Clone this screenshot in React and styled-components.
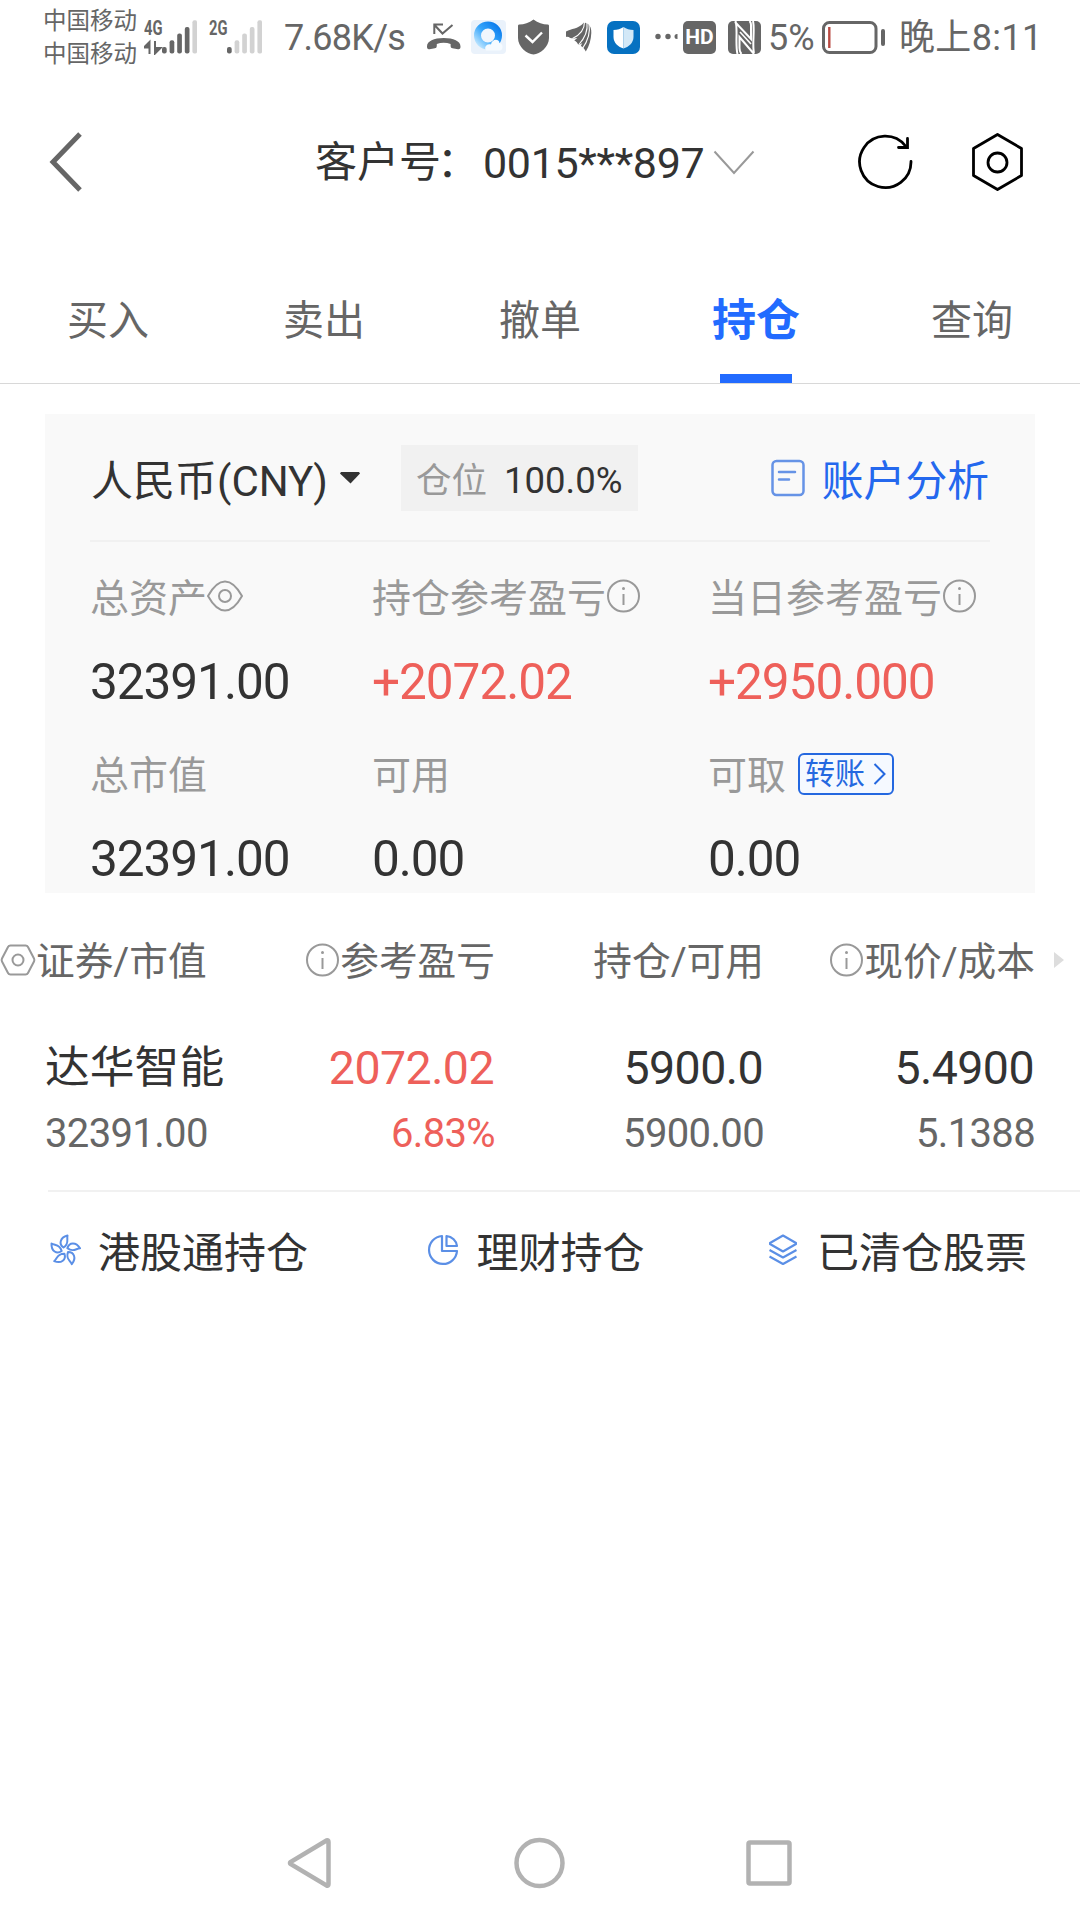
import React from 'react';
import styled, { createGlobalStyle } from 'styled-components';

const tabs = ['买入', '卖出', '撤单', '持仓', '查询']

export const App = () => (
  <>
    <GlobalStyle />
    <Screen>
      <StatusBar />
      <Header />
      <TabBar>
        {tabs.map((tab) => (
          <Tab key={tab} type="button" $active={tab === '持仓'}>{tab}</Tab>
        ))}
      </TabBar>
      <AccountCard />
      <Holdings />
      <QuickLinks />
      <SystemNav />
    </Screen>
  </>
)

export default App

const StatusBar = () => (
  <StatusWrapper>
    <Carriers>
      <span>中国移动</span>
      <span>中国移动</span>
    </Carriers>
    <Signal $left={7}>
      <Network>4G</Network>
      <SignalIcon bars={4} arrows />
    </Signal>
    <Signal $left={12}>
      <Network>2G</Network>
      <SignalIcon bars={1} />
    </Signal>
    <StatusText $left={22} $width={123} $spacing="-0.02em">7.68K/s</StatusText>
    <StatusIcon $left={19} width="35" height="34" viewBox="0 0 35 34">
      <path d="M8.300 14V4.500h8.700M8.500 5l8 8.500L26.500 5" fill="none" stroke="#666" strokeWidth="2" />
      <path d="M1 26.500c0-5.500 7-8.500 16.700-8.500s16.800 3 16.800 8.500c0 2-.7 3-2.500 2.700l-5.500-1c-1.600-.3-2-.8-1.900-4.200-4.300-1.600-9.500-1.600-13.800 0 .1 3.400-.3 3.900-1.900 4.200l-5.400 1C1.700 29.500 1 28.500 1 26.500z" fill="#666" />
    </StatusIcon>
    <StatusIcon $left={10} width="35" height="34" viewBox="0 0 35 34">
      <defs>
        <linearGradient id="ring" x1="1" y1="0" x2="0" y2="1">
          <stop offset="0" stopColor="#0879ec" />
          <stop offset=".5" stopColor="#35a5fb" />
          <stop offset="1" stopColor="#c3e8ff" />
        </linearGradient>
      </defs>
      <rect width="35" height="34" rx="4" fill="#eaf2fb" />
      <circle cx="17" cy="15.500" r="10.500" fill="#f0f6fd" stroke="url(#ring)" strokeWidth="7" />
      <path d="M15 30.500c-2.500-4 1.500-7.500 5-6 1-6 8-6 8.500-1.500 4 .5 4 7.500 0 7.500z" fill="#f6fbff" />
    </StatusIcon>
    <StatusIcon $left={12} width="31" height="36" viewBox="0 0 31 36">
      <path d="M15.500.5C11 4 6 5.500 1.500 5.500.5 5.500 0 6 0 7v12c0 9 9 16 15.500 16.500C22 35 31 28 31 19V7c0-1-.5-1.500-1.500-1.500C25 5.500 20 4 15.500.5z" fill="#666" />
      <path d="M7.500 16.500l7 6.500 9.500-9.500" fill="none" stroke="#fff" strokeWidth="2.400" />
    </StatusIcon>
    <StatusIcon $left={17} width="26" height="34" viewBox="0 0 26 34">
      <path d="M0 11.500C6 8 11 10 18 2.500l2 .5 2 1c2.500 2 3.500 5 3.300 9-.3 7-2 13-5.500 18.500-1.500-3-3-4.500-5-5.500l1.500-3c-1.500 1-2.500 1.500-4 2-.8-2.300-2-3.500-4-4.500l3-2.500c-3 .7-5.500.5-7 0-1.500-1-3-1.500-4.300-1z" fill="#666" />
      <path d="M18.500 2c0 7-4.500 13-12 16.500M21 3c1 8-2 15-8.500 22M23 4.500c1.500 8-1 16-6.500 24" fill="none" stroke="#fff" strokeWidth="1.100" />
    </StatusIcon>
    <StatusIcon $left={15} width="33" height="33" viewBox="0 0 33 33">
      <rect width="33" height="33" rx="7" fill="#0671c1" />
      <path d="M16.500 6c-3 2-6 3-10 3v7c0 6 5 10 10 11.500z" fill="#fff" />
      <path d="M16.500 6c3 2 6 3 10 3v7c0 6-5 10-10 11.500z" fill="#d3e8f7" />
    </StatusIcon>
    <StatusIcon $left={15} width="23" height="10" viewBox="0 0 23 10">
      <circle cx="3" cy="4.500" r="2.700" fill="#666" />
      <circle cx="13" cy="4.500" r="2.700" fill="#666" />
      <path d="M22.500 2h-.5a2.500 2.500 0 0 0 0 5h.5z" fill="#666" />
    </StatusIcon>
    <HdBadge>HD</HdBadge>
    <StatusIcon $left={12} width="33" height="33" viewBox="0 0 33 33">
      <rect width="33" height="33" rx="5" fill="#666" />
      <path d="M7.500 0C10 8 7 24 9.500 33M7 1l16 17V4c0-2-.5-3-1.500-4" fill="none" stroke="#fff" strokeWidth="2" />
      <path d="M26 33L11.500 16v11c0 3 1 5 2 6M25 0c2 8-1 24 1 32" fill="none" stroke="#fff" strokeWidth="2" />
      <path d="M12 11l11 12" fill="none" stroke="#fff" strokeWidth="1.600" />
    </StatusIcon>
    <StatusText $left={7} $width={46}>5%</StatusText>
    <StatusIcon $left={8} width="64" height="33" viewBox="0 0 64 33">
      <rect x="1.500" y="1.500" width="52.500" height="30" rx="6" fill="none" stroke="#666" strokeWidth="3" />
      <path d="M7.300 6v21" stroke="#b94a42" strokeWidth="2.400" />
      <rect x="59" y="8" width="4" height="17" rx="2" fill="#666" />
    </StatusIcon>
    <StatusText $left={13} $width={140} $spacing="0.01em">晚上8:11</StatusText>
  </StatusWrapper>
)

const SignalIcon = ({ bars, arrows }) => (
  <svg width="53" height="35" viewBox="0 0 53 35">
    {arrows && <path d="M5.500 34V22L0 27.500h5M11 21v12.500l5.500-5.500H12" fill="#666" stroke="#666" strokeWidth="2" />}
    {[0, 1, 2, 3, 4].map((i) => (
      <rect
        key={i}
        x={18 + i * 7.600}
        y={27 - i * 6.700}
        width="4.700"
        height={6.500 + i * 6.700}
        rx="2"
        fill={i < bars ? '#666' : '#d2d2d2'} />
    ))}
  </svg>
)

const Header = () => (
  <HeaderWrapper>
    <svg width="34" height="60" viewBox="0 0 34 60">
      <path d="M32 2L5 30l27 28" fill="none" stroke="#666" strokeWidth="5" />
    </svg>
    <Account>
      <AccountLabel>客户号<Colon>：</Colon></AccountLabel>
      <AccountNumber>0015***897</AccountNumber>
      <svg width="42" height="26" viewBox="0 0 42 26">
        <path d="M1.500 2.500L21 24 40.500 2.500" fill="none" stroke="#999" strokeWidth="2" />
      </svg>
    </Account>
    <HeaderActions>
      <svg width="56" height="56" viewBox="0 0 56 56" fill="none" stroke="#000" strokeWidth="2.800" strokeLinecap="round">
        <path d="M53 27.500A25.700 25.700 0 1 1 47.500 12" />
        <path d="M40.500 13.500h9V4.500" />
      </svg>
      <svg width="52" height="60" viewBox="0 0 52 60" fill="none" stroke="#000" strokeWidth="2.800" strokeLinejoin="round">
        <path d="M25.500 2.500l24 14v27l-24 14-24-14v-27z" />
        <circle cx="25.500" cy="30.500" r="9.500" />
      </svg>
    </HeaderActions>
  </HeaderWrapper>
)

const InfoIcon = () => (
  <svg width="35" height="34" viewBox="0 0 35 34" fill="none" stroke="#999" strokeWidth="2">
    <circle cx="17.500" cy="17" r="15.500" />
    <path d="M17.500 15v11" />
    <circle cx="17.500" cy="9.500" r="1.500" fill="#999" stroke="none" />
  </svg>
)

const EyeIcon = () => (
  <svg width="37" height="34" viewBox="0 0 37 34" fill="none" stroke="#999" strokeWidth="2">
    <path d="M1 17C6 8 12 2.500 18 2.500S30 8 35 17C30 26 24 31.500 18 31.500S6 26 1 17z" strokeLinejoin="round" />
    <circle cx="18" cy="17" r="6" />
  </svg>
)

const AccountCard = () => (
  <Card>
    <CardTop>
      <Currency>人民币(CNY)</Currency>
      <svg width="20" height="12" viewBox="0 0 20 12">
        <path d="M1 0h18l1 1.500L10.500 11.500 0 1.500z" fill="#333" />
      </svg>
      <Position>
        仓位
        <strong>100.0%</strong>
      </Position>
      <Analysis>
        <svg width="34" height="38" viewBox="0 0 34 38" fill="none" stroke="#6693e6" strokeWidth="2.500">
          <rect x="1.500" y="2" width="31" height="34" rx="4" />
          <path d="M8 13h16M8 20.500h10" strokeLinecap="round" />
        </svg>
        <span>账户分析</span>
      </Analysis>
    </CardTop>
    <Figures>
      <Figure>
        <FigureLabel><span>总资产</span><EyeIcon /></FigureLabel>
        <FigureValue>32391.00</FigureValue>
      </Figure>
      <Figure>
        <FigureLabel><span>持仓参考盈亏</span><InfoIcon /></FigureLabel>
        <FigureValue $up>+2072.02</FigureValue>
      </Figure>
      <Figure>
        <FigureLabel><span>当日参考盈亏</span><InfoIcon /></FigureLabel>
        <FigureValue $up>+2950.000</FigureValue>
      </Figure>
      <Figure>
        <FigureLabel><span>总市值</span></FigureLabel>
        <FigureValue>32391.00</FigureValue>
      </Figure>
      <Figure>
        <FigureLabel><span>可用</span></FigureLabel>
        <FigureValue>0.00</FigureValue>
      </Figure>
      <Figure>
        <FigureLabel>
          <span>可取</span>
          <TransferButton type="button">
            转账
            <svg width="13" height="22" viewBox="0 0 13 22">
              <path d="M1.500 1l10 10-10 10" fill="none" stroke="#2468e0" strokeWidth="2" />
            </svg>
          </TransferButton>
        </FigureLabel>
        <FigureValue>0.00</FigureValue>
      </Figure>
    </Figures>
  </Card>
)

const Holdings = () => (
  <section>
    <TableHead>
      <HeadCell $first>
        <svg width="36" height="32" viewBox="0 0 36 32" fill="none" stroke="#999" strokeWidth="2">
          <path d="M10.500 1.500h15c1 0 2 .5 2.500 1.500l6 11.500c.5 1 .5 2 0 3L28 29c-.5 1-1.500 1.500-2.500 1.500h-15c-1 0-2-.5-2.500-1.500L2 17.500c-.5-1-.5-2 0-3L8 3c.5-1 1.500-1.500 2.500-1.500z" />
          <circle cx="18" cy="16" r="5.500" />
        </svg>
        <span>证券/市值</span>
      </HeadCell>
      <HeadCell><InfoIcon /><span>参考盈亏</span></HeadCell>
      <HeadCell><span>持仓/可用</span></HeadCell>
      <HeadCell><InfoIcon /><span>现价/成本</span></HeadCell>
      <MoreArrow width="10" height="16" viewBox="0 0 10 16">
        <path d="M0 0l10 8-10 8z" fill="#ddd" />
      </MoreArrow>
    </TableHead>
    <StockRow>
      <StockCell $first>
        <StockName>达华智能</StockName>
        <SubValue>32391.00</SubValue>
      </StockCell>
      <StockCell $up>
        <MainValue>2072.02</MainValue>
        <SubValue $up>6.83%</SubValue>
      </StockCell>
      <StockCell>
        <MainValue>5900.0</MainValue>
        <SubValue>5900.00</SubValue>
      </StockCell>
      <StockCell>
        <MainValue>5.4900</MainValue>
        <SubValue>5.1388</SubValue>
      </StockCell>
    </StockRow>
    <Divider />
  </section>
)

const QuickLinks = () => (
  <LinksWrapper>
    <QuickLink $gap={17}>
      <svg width="32" height="32" viewBox="0 0 32 32" fill="none" stroke="#5b8fe6" strokeWidth="2" strokeLinejoin="round">
        {[0, 72, 144, 216, 288].map((angle) => (
          <path
            key={angle}
            d="M14.500 13.500C9.500 10 11 3.500 18.500 1.500c-1 4 2 8-4 12z"
            transform={`rotate(${angle} 16 16.500)`} />
        ))}
      </svg>
      <span>港股通持仓</span>
    </QuickLink>
    <QuickLink $gap={17}>
      <svg width="32" height="32" viewBox="0 0 32 32" fill="none" stroke="#5b8fe6" strokeWidth="2.200" strokeLinejoin="round">
        <path d="M15 2A14 14 0 1 0 30 17H15z" />
        <path d="M19.500 2v10H30C29.500 7 25 2.500 19.500 2z" />
      </svg>
      <span>理财持仓</span>
    </QuickLink>
    <QuickLink $gap={20}>
      <svg width="28" height="32" viewBox="1 0 28 32" fill="none" stroke="#5b8fe6" strokeWidth="2.200" strokeLinejoin="round">
        <path d="M15 1.500l13 7.500v1l-13 7.500L2 10V9z" />
        <path d="M1.500 16L15 23.500 28.500 16M1.500 22.500L15 30l13.500-7.500" />
      </svg>
      <span>已清仓股票</span>
    </QuickLink>
  </LinksWrapper>
)

const SystemNav = () => (
  <NavWrapper>
    <svg width="45" height="52" viewBox="0 0 45 52">
      <path d="M39.500 3.500L3.500 25c-.7.600-.7 1.400 0 2l36 21.500c1.500.5 2 0 2-1.500V5c0-1.500-.5-2-2-1.500z" />
    </svg>
    <svg width="52" height="52" viewBox="0 0 52 52">
      <circle cx="26.500" cy="26" r="23" />
    </svg>
    <svg width="46" height="52" viewBox="0 0 46 52">
      <rect x="2.500" y="5.500" width="41" height="41" rx="1.500" />
    </svg>
  </NavWrapper>
)

// Styled components
const GlobalStyle = createGlobalStyle`
  * {
    box-sizing: border-box;
  }
  body {
    margin: 0;
    background: #fff;
    font-family: Roboto, 'Noto Sans CJK SC', sans-serif;
    color: #333;
  }
  button {
    padding: 0;
    border: none;
    background: none;
    font-family: inherit;
  }
  svg {
    display: block;
    flex-shrink: 0;
  }
`

const Screen = styled.main`
  width: 1080px;
  height: 1920px;
  display: flex;
  flex-direction: column;
  overflow: hidden;
`

const StatusWrapper = styled.div`
  height: 74px;
  padding-left: 43px;
  display: flex;
  align-items: center;
  white-space: nowrap;
  color: #666;
`

const Carriers = styled.div`
  display: flex;
  flex-direction: column;
  width: 94px;
  padding-top: 1px;
  font-size: 23.5px;
  line-height: 33px;
`

const Signal = styled.div`
  width: 53px;
  height: 35px;
  margin-left: ${(props) => props.$left}px;
  position: relative;
`

const Network = styled.span`
  position: absolute;
  left: 0;
  top: 0;
  font-size: 21px;
  line-height: 16px;
  font-weight: 700;
  transform: scaleX(0.7);
  transform-origin: left;
`

const StatusText = styled.span`
  width: ${(props) => props.$width}px;
  margin-left: ${(props) => props.$left}px;
  padding-top: 3px;
  font-size: 36px;
  line-height: 71px;
  letter-spacing: ${(props) => props.$spacing || 'normal'};
`

const StatusIcon = styled.svg`
  margin-left: ${(props) => props.$left}px;
`

const HdBadge = styled.span`
  width: 33px;
  height: 33px;
  margin-left: 5px;
  border-radius: 5px;
  background: #666;
  color: #fff;
  font-size: 21px;
  font-weight: 700;
  line-height: 33px;
  text-align: center;
`

const HeaderWrapper = styled.header`
  height: 176px;
  padding: 0 56px 0 48px;
  display: flex;
  align-items: center;
`

const Account = styled.div`
  display: flex;
  align-items: center;
  margin-left: 233px;
  line-height: 60px;
`

const AccountLabel = styled.span`
  width: 168px;
  padding-top: 2px;
  font-size: 42px;
  white-space: nowrap;
`

const Colon = styled.span`
  margin-left: -4px;
`

const AccountNumber = styled.span`
  width: 230px;
  padding-top: 2px;
  font-size: 43px;
  letter-spacing: -0.008em;
`

const HeaderActions = styled.div`
  display: flex;
  align-items: center;
  gap: 58px;
  margin-left: auto;
`

const TabBar = styled.nav`
  height: 134px;
  display: grid;
  grid-template-columns: repeat(5, 1fr);
  border-bottom: 1px solid #d8d8d8;
`

const Tab = styled.button`
  display: flex;
  flex-direction: column;
  align-items: center;
  justify-content: space-between;
  padding-top: 41px;
  line-height: 60px;
  font-size: ${(props) => (props.$active ? 44 : 41)}px;
  font-weight: ${(props) => (props.$active ? 700 : 400)};
  color: ${(props) => (props.$active ? '#226bff' : '#666')};

  &::after {
    content: '';
    width: 72px;
    height: 9px;
    background: ${(props) => (props.$active ? '#226bff' : 'transparent')};
  }
`

const Card = styled.section`
  height: 479px;
  margin: 30px 45px 0;
  padding: 0 45px;
  background: #f9f9f9;
`

const CardTop = styled.div`
  height: 128px;
  padding: 2px 1px 0;
  display: flex;
  align-items: center;
  border-bottom: 2px solid #f1f1f1;
`

const Currency = styled.span`
  width: 249px;
  padding-bottom: 1px;
  font-size: 42px;
`

const Position = styled.span`
  width: 237px;
  height: 66px;
  margin-left: 41px;
  padding: 3px 0 0 15px;
  background: #f1f1f1;
  color: #999;
  font-size: 35.5px;
  line-height: 66px;
  white-space: nowrap;

  strong {
    margin-left: 17px;
    font-size: 36.5px;
    font-weight: 400;
    color: #333;
  }
`

const Analysis = styled.a`
  display: flex;
  align-items: center;
  gap: 17px;
  margin-left: auto;
  color: #2468ee;
  font-size: 41.8px;

  span {
    padding-bottom: 1px;
  }
`

const Figures = styled.div`
  display: grid;
  grid-template-columns: 282px 336px 1fr;
  grid-auto-rows: 177px;
  padding-top: 19px;
`

const Figure = styled.div`
  white-space: nowrap;
`

const FigureLabel = styled.div`
  height: 70px;
  display: flex;
  align-items: center;
  font-size: 39px;
  color: #999;

  span {
    padding-bottom: 3px;
  }
`

const FigureValue = styled.div`
  font-size: 49.5px;
  line-height: 60px;
  margin-top: 21px;
  letter-spacing: -0.021em;
  color: ${(props) => (props.$up ? '#ee605a' : '#333')};
`

const TransferButton = styled.button`
  width: 96px;
  height: 42px;
  margin: 2px 0 0 12px;
  padding: 0 6px 0 5px;
  display: flex;
  align-items: center;
  justify-content: space-between;
  border: 2px solid #2468e0;
  border-radius: 6px;
  background: #f5f9ff;
  color: #2468e0;
  font-size: 30px;
  line-height: 36px;
`

const TableHead = styled.div`
  height: 135px;
  padding: 0 16px 2px 0;
  display: grid;
  grid-template-columns: 207px 288px 269px 271px 1fr;
  align-items: center;
`

const HeadCell = styled.div`
  display: flex;
  align-items: center;
  justify-content: ${(props) => (props.$first ? 'flex-start' : 'flex-end')};
  font-size: 38.7px;
  white-space: nowrap;
  color: #666;

  span {
    padding-bottom: 3px;
  }
`

const MoreArrow = styled.svg`
  justify-self: end;
`

const StockRow = styled.div`
  height: 162px;
  margin-left: 45px;
  padding-top: 1px;
  display: grid;
  grid-template-columns: 201px 249px 269px 271px;
`

const Divider = styled.div`
  height: 2px;
  margin-left: 48px;
  background: #f1f1f1;
`

const StockCell = styled.div`
  display: flex;
  flex-direction: column;
  align-items: ${(props) => (props.$first ? 'flex-start' : 'flex-end')};
  color: ${(props) => (props.$up ? '#ee605a' : '#333')};
`

const StockName = styled.span`
  font-size: 44.8px;
  line-height: 78px;
  white-space: nowrap;
`

const MainValue = styled.span`
  padding-right: 1px;
  font-size: 46.5px;
  line-height: 78px;
  letter-spacing: -0.012em;
`

const SubValue = styled.span`
  font-size: 40px;
  line-height: 53px;
  letter-spacing: -0.016em;
  color: ${(props) => (props.$up ? '#ee605a' : '#666')};
`

const LinksWrapper = styled.div`
  height: 116px;
  padding: 0 53px 0 49px;
  display: flex;
  align-items: center;
  justify-content: space-between;
`

const QuickLink = styled.a`
  display: flex;
  align-items: center;
  gap: ${(props) => props.$gap}px;
  font-size: 42px;

  &:nth-child(2) {
    margin-right: 5px;
  }

  span {
    padding-bottom: 2px;
  }
`

const NavWrapper = styled.nav`
  margin-top: auto;
  height: 114px;
  padding: 0 288px 0 287px;
  display: flex;
  align-items: center;
  justify-content: space-between;

  path, circle, rect {
    fill: none;
    stroke: #b2b2b2;
    stroke-width: 4.5;
  }
`
